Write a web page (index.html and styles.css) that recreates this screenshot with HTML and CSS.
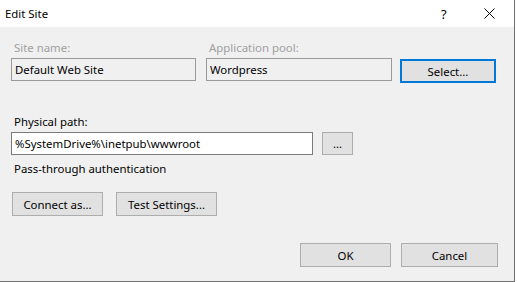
FILE: index.html
```html
<!DOCTYPE html>
<html lang="en">
<head>
    <meta charset="UTF-8">
    <meta name="viewport" content="width=device-width, initial-scale=1.0">
    <title>Edit Site</title>
    <link rel="stylesheet" href="styles.css">
</head>
<body>
    <div class="dialog">
        <div class="titlebar">
            <span class="title">Edit Site</span>
            <span class="help">?</span>
            <span class="close">
                <svg width="11" height="11" viewBox="0 0 11 11">
                    <path d="M0.5 0.5 L10.5 10.5 M10.5 0.5 L0.5 10.5" stroke="#000" stroke-width="1" fill="none"/>
                </svg>
            </span>
        </div>

        <div class="content">
            <div class="site-row">
                <div class="field site-field">
                    <label class="disabled-label">Site name:</label>
                    <input type="text" class="textbox disabled-input" value="Default Web Site" readonly>
                </div>
                <div class="field pool-field">
                    <label class="disabled-label">Application pool:</label>
                    <input type="text" class="textbox disabled-input" value="Wordpress" readonly>
                </div>
                <button class="btn select-button">Select...</button>
            </div>

            <div class="path-block">
                <label class="path-label">Physical path:</label>
                <div class="path-row">
                    <input type="text" class="textbox path-input" value="%SystemDrive%\inetpub\wwwroot">
                    <button class="btn browse-button">...</button>
                </div>
                <div class="auth-text">Pass-through authentication</div>
            </div>

            <div class="button-row">
                <button class="btn connect-button">Connect as...</button>
                <button class="btn test-button">Test Settings...</button>
            </div>

            <div class="footer">
                <button class="btn ok-button">OK</button>
                <button class="btn cancel-button">Cancel</button>
            </div>
        </div>
    </div>
</body>
</html>
```

FILE: styles.css
```css
body {
    margin: 0;
    background: #fff;
    font-family: "Noto Sans", "Open Sans", sans-serif;
    font-size: 11.4px;
    color: #000;
}

.dialog {
    width: 515px;
    height: 282px;
    box-sizing: border-box;
    background: #f0f0f0;
    border-right: 1px solid #6f6f6f;
    border-bottom: 1px solid #6f6f6f;
    display: flex;
    flex-direction: column;
}

.titlebar {
    height: 27px;
    flex: none;
    background: #fff;
    display: flex;
    align-items: center;
    padding-left: 5px;
}

.title {
    flex: 1;
}

.help {
    width: 12px;
    margin-right: 31px;
    font-size: 13px;
}

.close {
    width: 11px;
    height: 11px;
    margin-right: 19px;
    display: flex;
}

.content {
    flex: 1;
    padding-left: 11px;
    display: flex;
    flex-direction: column;
}

/* first row: site name, app pool, select */
.site-row {
    display: flex;
    align-items: flex-end;
    margin-top: 13px;
}

.field {
    display: flex;
    flex-direction: column;
}

.site-field {
    width: 185px;
    margin-right: 10px;
}

.pool-field {
    width: 186px;
    margin-right: 8px;
}

label {
    padding-left: 3px;
    line-height: 16px;
    margin-bottom: 2px;
}

.disabled-label {
    color: #a0a0a0;
}

.textbox {
    height: 23px;
    box-sizing: border-box;
    border: 1px solid #7a7a7a;
    padding: 0 3px;
    margin: 0;
    font: inherit;
    color: #000;
    background: #fff;
    outline: none;
}

.disabled-input {
    background: #f0f0f0;
    border-color: #9a9a9a;
}

.btn {
    height: 24px;
    box-sizing: border-box;
    border: 1px solid #adadad;
    background: #e1e1e1;
    font: inherit;
    color: #000;
    padding: 0;
    margin: 0;
}

.select-button {
    width: 96px;
    margin-bottom: -2px;
    border: 2px solid #0078d7;
}

/* physical path */
.path-block {
    display: flex;
    flex-direction: column;
    margin-top: 33px;
}

.path-label {
    margin-bottom: 2px;
}

.path-row {
    display: flex;
    align-items: flex-end;
}

.path-input {
    width: 302px;
    margin-right: 9px;
}

.browse-button {
    width: 31px;
    height: 23px;
}

.auth-text {
    padding-left: 3px;
    margin-top: 6px;
    line-height: 16px;
}

.button-row {
    display: flex;
    margin-top: 15px;
    padding-left: 1px;
}

.connect-button {
    width: 91px;
    margin-right: 13px;
}

.test-button {
    width: 101px;
}

.footer {
    display: flex;
    justify-content: flex-end;
    margin-top: 27px;
    padding-right: 16px;
}

.ok-button {
    width: 91px;
    margin-right: 10px;
}

.cancel-button {
    width: 97px;
}
```
